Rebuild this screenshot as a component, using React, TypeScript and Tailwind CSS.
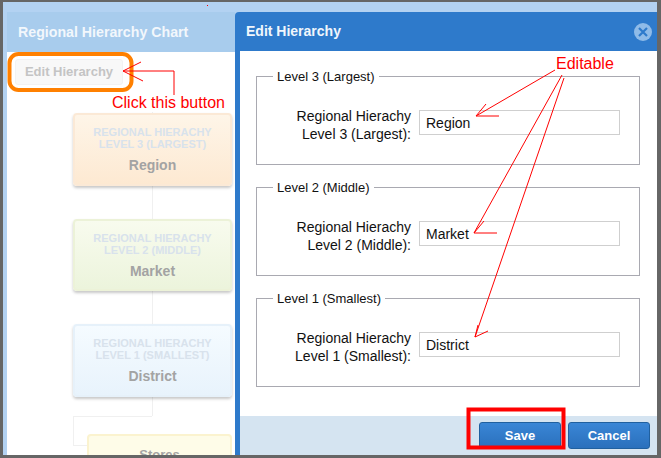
import React from 'react';

const nodes = [
  {
    title: 'LEVEL 3 (LARGEST)',
    name: 'Region',
    box: 'h-[73px] mt-[61px] border-[#fbe9d6] bg-gradient-to-b from-[#fef5e8] to-[#fde9d2]',
  },
  {
    title: 'LEVEL 2 (MIDDLE)',
    name: 'Market',
    box: 'h-[72px] mt-[33px] border-[#ecf2d8] bg-gradient-to-b from-[#f8fbee] to-[#ecf4dc]',
  },
  {
    title: 'LEVEL 1 (SMALLEST)',
    name: 'District',
    box: 'h-[73px] mt-[33px] border-[#e6f1fa] bg-gradient-to-b from-[#f5fbff] to-[#e8f3fc]',
  },
];

const levels = [
  { legend: 'Level 3 (Largest)', value: 'Region', mt: 'mt-[18px]' },
  { legend: 'Level 2 (Middle)', value: 'Market', mt: 'mt-[15px]' },
  { legend: 'Level 1 (Smallest)', value: 'District', mt: 'mt-[15px]' },
];

const ChartPanel: React.FC = () => (
  <div className="w-[228px] shrink-0 flex flex-col bg-white overflow-hidden">
    <div className="h-[40px] shrink-0 bg-[#a8cced] pl-[11px] pt-[11px] text-[14.2px] leading-[18px] font-bold text-[#f2f7fc]">
      Regional Hierarchy Chart
    </div>
    <div className="relative flex-1 pl-[66px] overflow-hidden">
      <div className="absolute left-[145px] top-[60px] w-px h-[304px] bg-[#f0f0f0]" />
      <div className="absolute left-[66px] top-[364px] w-[79px] h-px bg-[#f0f0f0]" />
      <div className="absolute left-[66px] top-[364px] w-px h-[29px] bg-[#f0f0f0]" />
      <div className="absolute left-[66px] top-[393px] w-[14px] h-px bg-[#f0f0f0]" />
      <button className="absolute left-[8px] top-[7px] w-[108px] h-[26px] rounded-[3px] border border-[#f2f2f2] bg-[#f8f8f8] text-[13px] font-bold text-[#c4c4c4]">
        Edit Hierarchy
      </button>
      {nodes.map((n) => (
        <div
          key={n.name}
          className={`relative w-[159px] shrink-0 rounded-[4px] border-2 shadow-[0_2px_3px_rgba(0,0,0,0.22)] flex flex-col items-center pt-[11px] ${n.box}`}
        >
          <div className="text-[11px] leading-[12px] font-bold text-[#d8e2ec] text-center whitespace-nowrap">
            REGIONAL HIERACHY
            <br />
            {n.title}
          </div>
          <div className="mt-[7px] text-[14px] leading-[16px] font-bold text-[#a3a3a3]">{n.name}</div>
        </div>
      ))}
      <div className="relative ml-[14px] mt-[37px] w-[145px] h-[40px] rounded-[4px] border-2 border-[#fbf3cf] bg-[#fefce8] pt-[11px] text-center text-[13px] leading-[16px] font-bold text-[#a3a3a3]">
        Stores
      </div>
    </div>
  </div>
);

const EditModal: React.FC = () => (
  <div className="relative flex-1 flex flex-col bg-[#2e7acb] rounded-tl-[4px]">
    <div className="h-[39px] shrink-0 flex items-center justify-between pl-[11px] pr-[5px] text-[14px] font-bold text-[#f0f6fc]">
      <span>Edit Hierarchy</span>
      <span className="mt-[1px] w-[18px] h-[18px] rounded-full bg-[#8fbbe8] flex items-center justify-center">
        <svg width="10" height="10" viewBox="0 0 10 10">
          <path d="M1 1L9 9M9 1L1 9" stroke="#2e7acb" strokeWidth="2.2" />
        </svg>
      </span>
    </div>
    <div className="flex-1 flex flex-col ml-[5px] bg-white">
      <div className="flex-1 flex flex-col pl-[16px] pr-[17px]">
        {levels.map((l) => (
          <fieldset key={l.value} className={`h-[96px] border border-[#a9a9b1] pl-[16px] ${l.mt}`}>
            <legend className="px-[4px] text-[13px] leading-[15px] text-[#111]">{l.legend}</legend>
            <div className="flex items-start mt-[23px]">
              <label className="w-[138px] text-right text-[14px] leading-[18px] text-[#111]">
                Regional Hierachy
                <br />
                {l.legend}:
              </label>
              <input
                readOnly
                value={l.value}
                className="ml-[8px] mt-[3px] w-[201px] h-[25px] border border-[#cfcfcf] px-[6px] text-[14px] text-[#111] outline-none"
              />
            </div>
          </fieldset>
        ))}
      </div>
      <div className="h-[39px] shrink-0 bg-[#d5e4f1] flex items-start justify-end gap-[7px] pt-[6px] pr-[7px]">
        <button className="w-[82px] h-[27px] rounded-[3px] border border-[#20609f] bg-gradient-to-b from-[#3a86d6] to-[#2a70bc] text-[13px] font-bold text-white">
          Save
        </button>
        <button className="w-[82px] h-[27px] rounded-[3px] border border-[#20609f] bg-gradient-to-b from-[#3a86d6] to-[#2a70bc] text-[13px] font-bold text-white">
          Cancel
        </button>
      </div>
    </div>
  </div>
);

// Hand-drawn callouts on top of the screenshot
const Annotations: React.FC = () => (
  <>
    <svg className="absolute inset-0 pointer-events-none" width="661" height="458" fill="none">
      <rect x="9.5" y="54" width="122" height="36" rx="9" stroke="#ff8000" strokeWidth="4" />
      <path d="M141 62L123 71L143 81M123 71H174V95" stroke="#ff0000" />
      <path d="M555 70L476 116M486 104L476 116H499" stroke="#ff0000" />
      <path d="M562 75L474 233M484 221L474 233H497" stroke="#ff0000" />
      <path d="M564 78L475 337M478 325L475 337L488 331" stroke="#ff0000" />
      <rect x="468.5" y="409.5" width="95" height="38" stroke="#ff0000" strokeWidth="4" />
      <rect x="207" y="5" width="1" height="1" fill="#ff0000" />
    </svg>
    <span className="absolute left-[112px] top-[94px] text-[16px] leading-[18px] text-[#ff0000]">Click this button</span>
    <span className="absolute left-[556px] top-[55px] text-[16px] leading-[18px] text-[#ff0000]">Editable</span>
  </>
);

export default function App() {
  return (
    <div className="relative w-[661px] h-[458px] bg-[#666666] pt-[2px] pl-[3px] pr-[4px] pb-[3px] font-['Liberation_Sans',Arial,sans-serif]">
      <div className="w-full h-full flex flex-col bg-[#b3d2f2] pt-[10px] pl-[4px]">
        <div className="flex-1 flex min-h-0">
          <ChartPanel />
          <EditModal />
        </div>
      </div>
      <Annotations />
    </div>
  );
}
